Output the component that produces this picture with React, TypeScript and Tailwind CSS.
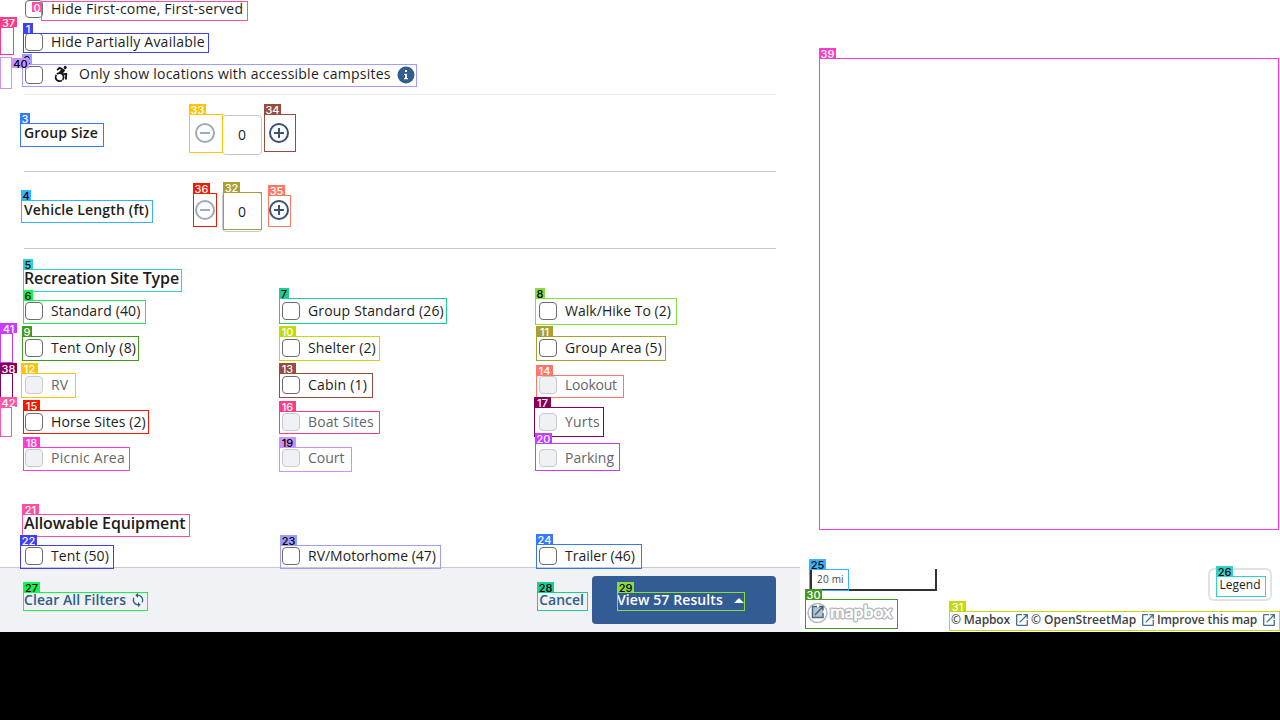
import React from "react";
import { FaAccessibleIcon } from "react-icons/fa";
import { MdOpenInNew, MdSync } from "react-icons/md";

type Mark = [id: number, x: number, y: number, w: number, h: number, color: string, dark?: boolean, tagX?: number, tagY?: number];

const marks: Mark[] = [
  [37, 0, 27, 14, 28, "#ff3b86"],
  [41, 0, 333, 13, 30, "#c83bff"],
  [38, 0, 373, 13, 25, "#85005b"],
  [42, 0, 407, 12, 30, "#ff55a5"],
  [0, 41, 1, 207, 20, "#ff4fa3", false, 32, 2],
  [1, 23, 33, 186, 20, "#3f3ffb"],
  [2, 22, 64, 395, 23, "#9d9dff", true],
  [40, 0, 57, 12, 32, "#c893ff", true, 12, 58],
  [3, 20, 123, 84, 24, "#3379ff"],
  [4, 21, 200, 132, 23, "#33b4ff", true],
  [5, 23, 269, 159, 23, "#33d0d0", true],
  [6, 23, 300, 123, 24, "#12f54b", true],
  [7, 279, 298, 168, 26, "#1bce94", true],
  [8, 535, 298, 142, 27, "#86dd3b", true],
  [9, 22, 336, 117, 25, "#42991b"],
  [10, 279, 336, 101, 25, "#c2d90b"],
  [11, 536, 336, 130, 25, "#ac9f32"],
  [12, 21, 373, 55, 25, "#ffc40a"],
  [13, 279, 373, 94, 25, "#984c39"],
  [14, 536, 375, 88, 23, "#ff7867"],
  [15, 23, 410, 126, 24, "#f41a02"],
  [16, 279, 411, 101, 23, "#ff3b86"],
  [17, 534, 407, 70, 30, "#85005b"],
  [18, 23, 447, 107, 24, "#ff3bcf"],
  [19, 279, 447, 73, 25, "#c893ff", true],
  [20, 535, 443, 85, 28, "#c83bff"],
  [21, 22, 514, 168, 23, "#ff4fa3"],
  [22, 20, 545, 94, 24, "#3f3ffb"],
  [23, 280, 545, 161, 24, "#9d9dff", true],
  [24, 536, 544, 106, 25, "#3379ff"],
  [25, 809, 569, 40, 22, "#33b4ff", true],
  [26, 1216, 576, 50, 21, "#33d0d0", true],
  [27, 23, 592, 125, 19, "#12f54b", true],
  [28, 537, 592, 51, 19, "#1bce94", true],
  [29, 617, 592, 128, 19, "#86dd3b", true],
  [30, 805, 599, 93, 30, "#42991b"],
  [31, 949, 611, 331, 20, "#c2d90b"],
  [32, 223, 192, 39, 38, "#ac9f32"],
  [33, 189, 114, 34, 39, "#ffc40a"],
  [34, 264, 114, 32, 38, "#984c39"],
  [35, 268, 195, 23, 32, "#ff7867"],
  [36, 193, 193, 24, 34, "#f41a02"],
  [39, 819, 58, 460, 472, "#ff3bcf"],
];

function Marker({ mark }: { mark: Mark }) {
  const [id, x, y, w, h, color, dark, tagX, tagY] = mark;
  return (
    <>
      <div className="absolute border" style={{ left: x, top: y, width: w, height: h, borderColor: color }} />
      <div
        className={`absolute flex h-[10px] items-center justify-center font-['Inter',sans-serif] text-[11px] leading-[10px] font-medium ${dark ? "text-black" : "text-white"}`}
        style={{ left: tagX ?? x, top: tagY ?? y - 10, width: id < 10 ? 10 : 17, background: color }}
      >
        <span className="mt-px">{id}</span>
      </div>
    </>
  );
}

function Check({ label, off = false, tracking = "" }: { label: string; off?: boolean; tracking?: string }) {
  return (
    <label className="flex h-5 items-center whitespace-nowrap">
      <span className={`ml-px h-[18px] w-[18px] shrink-0 rounded-[4px] border ${off ? "border-[#c9cacd] bg-[#f0f1f5]" : "border-[#6b6c70] bg-white"}`} />
      <span className={`ml-2 ${off ? "text-[#66676a]" : ""} ${tracking}`}>{label}</span>
    </label>
  );
}

function RoundButton({ plus = false }: { plus?: boolean }) {
  return (
    <svg width="20" height="20" viewBox="0 0 20 20" fill="none" stroke={plus ? "#3d5270" : "#a3a9b2"} strokeWidth="2">
      <circle cx="10" cy="10" r="9" fill="#f9fdff" />
      <path d={plus ? "M5 10h10M10 5v10" : "M5 10h10"} />
    </svg>
  );
}

function Stepper({ label }: { label: string }) {
  return (
    <div className="flex h-[77px] items-start border-b border-[#c6c7c9] pt-5">
      <div className="mt-2 w-[171px] leading-5 font-semibold tracking-[0.15px]">{label}</div>
      <div className="mt-2"><RoundButton /></div>
      <div className="ml-[7px] flex h-10 w-10 items-center justify-center rounded-[4px] border border-[#c6c7c9]">0</div>
      <div className="mt-2 ml-[7px]"><RoundButton plus /></div>
    </div>
  );
}

function OutIcon() {
  return <MdOpenInNew size={16} color="#47718c" className="-mx-px shrink-0" />;
}

const sites: [name: string, off: boolean, tracking: string][] = [
  ["Standard (40)", false, "tracking-[0.15px]"],
  ["Group Standard (26)", false, "tracking-[0.17px]"],
  ["Walk/Hike To (2)", false, "tracking-[0.03px]"],
  ["Tent Only (8)", false, "tracking-[0.19px]"],
  ["Shelter (2)", false, "tracking-[0.16px]"],
  ["Group Area (5)", false, "tracking-[0.12px]"],
  ["RV", true, ""],
  ["Cabin (1)", false, "tracking-[0.22px]"],
  ["Lookout", true, "tracking-[-0.25px]"],
  ["Horse Sites (2)", false, "tracking-[0.1px]"],
  ["Boat Sites", true, "tracking-[0.12px]"],
  ["Yurts", true, "tracking-[0.2px]"],
  ["Picnic Area", true, "tracking-[0.24px]"],
  ["Court", true, ""],
  ["Parking", true, ""],
];

export default function App() {
  return (
    <div className="relative h-[720px] w-[1280px] overflow-hidden bg-black font-['Open_Sans',sans-serif] text-sm text-[#1d1e20]">
      <div className="flex h-[632px] bg-white">
        <div className="flex w-[800px] flex-col">
          <div className="h-[567px] overflow-hidden px-6">
            <div className="-mt-px flex h-[96px] flex-col border-b border-[#f0f0f1]">
              <Check label="Hide First-come, First-served" tracking="tracking-[0.21px]" />
              <div className="mt-[13px]"><Check label="Hide Partially Available" tracking="tracking-[0.23px]" /></div>
              <div className="mt-[12px] flex h-5 items-center whitespace-nowrap">
                <span className="mt-px ml-px h-[18px] w-[18px] rounded-[4px] border border-[#6b6c70]" />
                <FaAccessibleIcon size={16} color="#151618" className="ml-[10px]" />
                <span className="ml-[10px] tracking-[0.24px]">Only show locations with accessible campsites</span>
                <svg className="mt-px ml-[6px]" width="18" height="18" viewBox="0 0 18 18">
                  <circle cx="9" cy="9" r="8.5" fill="#315d8f" />
                  <path d="M8 4h2v2H8zM7.2 7.700H10V12h1v1.300H7V12h1V9H7.200z" fill="#fff" />
                </svg>
              </div>
            </div>
            <Stepper label="Group Size" />
            <Stepper label="Vehicle Length (ft)" />
            <h2 className="mt-[17px] text-base leading-6 font-semibold tracking-[-0.12px]">Recreation Site Type</h2>
            <div className="mt-[11px] grid grid-cols-[257px_257px_1fr] grid-rows-[37px_37px_37px_36px_20px]">
              {sites.map(([name, off, tracking]) => <Check key={name} label={name} off={off} tracking={tracking} />)}
            </div>
            <h2 className="mt-[43px] text-base leading-6 font-semibold tracking-[-0.13px]">Allowable Equipment</h2>
            <div className="mt-[11px] grid grid-cols-[257px_257px_1fr]">
              <Check label="Tent (50)" tracking="tracking-[0.1px]" />
              <Check label="RV/Motorhome (47)" />
              <Check label="Trailer (46)" />
            </div>
          </div>
          <div className="flex h-[65px] items-center border-t border-[#c6c9cd] bg-[#f0f2f6] px-6 font-semibold text-[#2f5f8a]">
            <span className="tracking-[0.06px]">Clear All Filters</span>
            <MdSync size={16} color="#2f5f8a" className="ml-1" />
            <span className="mr-2 ml-auto">Cancel</span>
            <button className="flex h-12 w-[184px] items-center rounded-[4px] bg-[#335c95] pl-[25px] text-white">
              <span className="tracking-[0.1px]">View 57 Results</span>
              <svg className="ml-[11px]" width="10" height="5" viewBox="0 0 10 5"><path d="M0 5 5 0l5 5z" fill="#fff" /></svg>
            </button>
          </div>
        </div>
        <div className="flex flex-1 flex-col justify-end">
          <div className="flex items-end justify-between pr-2 pl-[10px]">
            <div className="mb-[10px] flex h-[22px] w-[127px] items-center border-2 border-t-0 border-[#303236] pl-[5px] text-[10px] tracking-[0.2px] text-[#45474a]">20 mi</div>
            <div className="flex h-[33px] w-16 items-center justify-center rounded-[6px] border-2 border-[#e2e2e3] pt-px text-xs">Legend</div>
          </div>
          <div className="flex h-[31px] items-end justify-between">
            <div className="mb-[7px] ml-[7px] flex h-6 items-center">
              <svg width="90" height="24" viewBox="0 0 90 24">
                <circle cx="10.5" cy="12" r="9.5" fill="#fff" stroke="#b5b7ba" strokeWidth="1.5" />
                <path d="M5 6h11v11H5z" fill="#b4c3ce" />
                <path d="M10 5.500H5.500v11h10.500V12M12 5.500h4v4M16 5.500 8 14" fill="none" stroke="#496980" strokeWidth="1.500" />
                <text x="23" y="16.500" fontFamily="Lato, sans-serif" fontSize="17" textLength="62" lengthAdjust="spacingAndGlyphs" fill="#fff" stroke="#b0b2b5" strokeWidth="3" strokeLinejoin="round">mapbox</text>
                <text x="23" y="16.500" fontFamily="Lato, sans-serif" fontSize="17" textLength="62" lengthAdjust="spacingAndGlyphs" fill="#fff" stroke="#fff" strokeWidth="0.700" aria-hidden="true">mapbox</text>
              </svg>
            </div>
            <div className="mb-[2px] flex h-5 w-[329px] items-center text-xs font-semibold whitespace-nowrap text-[#404144]">
              <span className="w-16 tracking-[-0.12px]">© Mapbox</span><OutIcon />
              <span className="ml-[2px] w-[110px]">© OpenStreetMap</span><OutIcon />
              <span className="ml-[2px] w-[105px] tracking-[-0.12px]">Improve this map</span><OutIcon />
            </div>
          </div>
        </div>
      </div>
      {marks.map((mark) => <Marker key={mark[0]} mark={mark} />)}
    </div>
  );
}
